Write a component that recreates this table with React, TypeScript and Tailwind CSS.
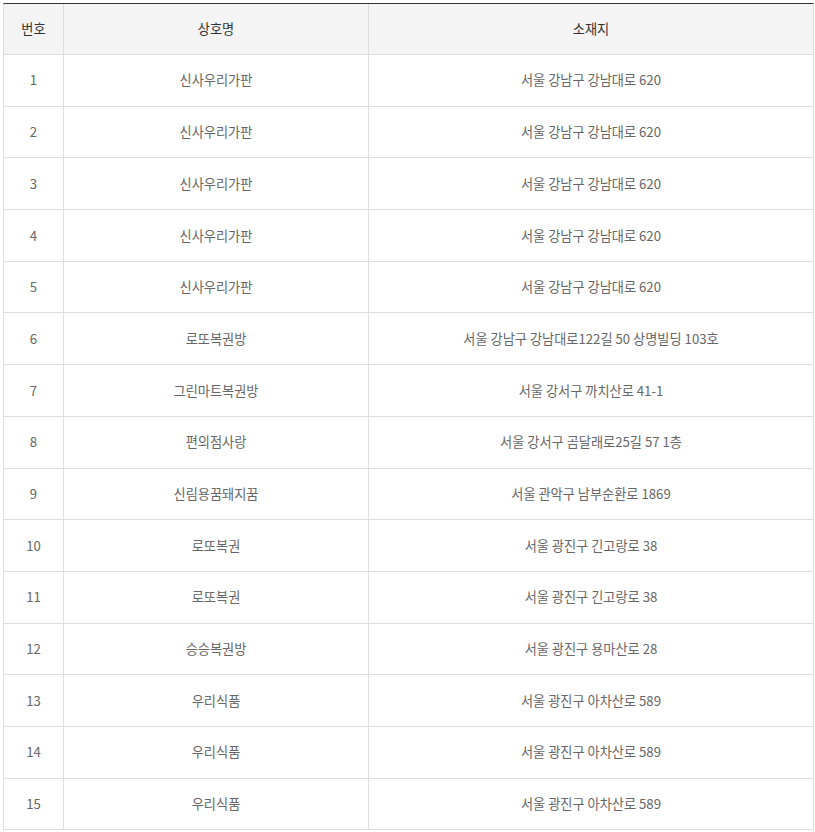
const rows = [
  { name: '신사우리가판', addr: '서울 강남구 강남대로 620' },
  { name: '신사우리가판', addr: '서울 강남구 강남대로 620' },
  { name: '신사우리가판', addr: '서울 강남구 강남대로 620' },
  { name: '신사우리가판', addr: '서울 강남구 강남대로 620' },
  { name: '신사우리가판', addr: '서울 강남구 강남대로 620' },
  { name: '로또복권방', addr: '서울 강남구 강남대로122길 50 상명빌딩 103호' },
  { name: '그린마트복권방', addr: '서울 강서구 까치산로 41-1' },
  { name: '편의점사랑', addr: '서울 강서구 곰달래로25길 57 1층' },
  { name: '신림용꿈돼지꿈', addr: '서울 관악구 남부순환로 1869' },
  { name: '로또복권', addr: '서울 광진구 긴고랑로 38' },
  { name: '로또복권', addr: '서울 광진구 긴고랑로 38' },
  { name: '승승복권방', addr: '서울 광진구 용마산로 28' },
  { name: '우리식품', addr: '서울 광진구 아차산로 589' },
  { name: '우리식품', addr: '서울 광진구 아차산로 589' },
  { name: '우리식품', addr: '서울 광진구 아차산로 589' },
]

export default function App() {
  return (
    <div className="bg-white min-h-[832px] pt-[3px] pl-[3px] font-['Noto_Sans_CJK_KR','Noto_Sans',sans-serif] text-[13.2px]">
      <div className="w-[811px] border-t border-t-[#333] border-x border-x-[#ddd]">
        {/* Header */}
        <div className="flex h-[51px] bg-[#f4f4f4] border-b border-[#ddd] text-[#333]">
          <div className="w-[60px] border-r border-[#ddd] flex items-center justify-center">번호</div>
          <div className="w-[305px] border-r border-[#ddd] flex items-center justify-center">상호명</div>
          <div className="flex-1 flex items-center justify-center">소재지</div>
        </div>

        {rows.map((row, i) => (
          <div key={i} className="flex h-[51.7px] border-b border-[#ddd] text-[#666]">
            <div className="w-[60px] border-r border-[#ddd] flex items-center justify-center">{i + 1}</div>
            <div className="w-[305px] border-r border-[#ddd] flex items-center justify-center">{row.name}</div>
            <div className="flex-1 flex items-center justify-center">{row.addr}</div>
          </div>
        ))}
      </div>
    </div>
  )
}
